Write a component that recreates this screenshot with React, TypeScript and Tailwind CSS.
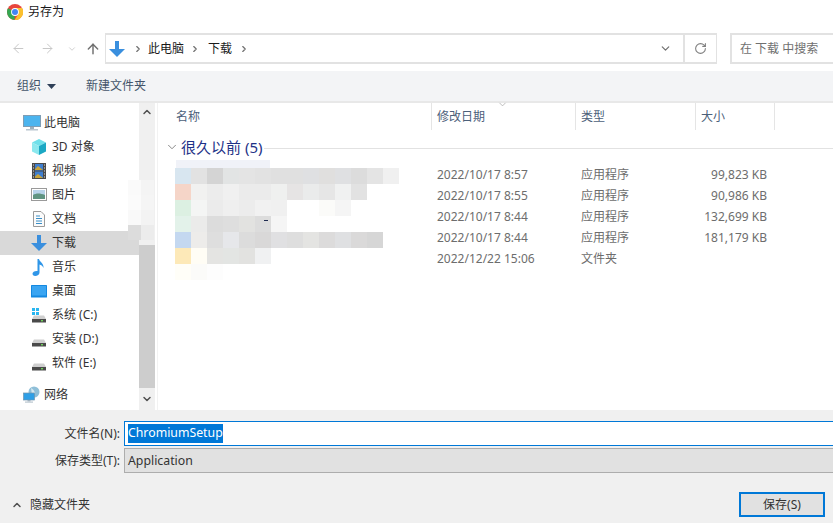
import React from "react";
import { ArrowLeft, ArrowRight, ArrowUp, ChevronDown, ChevronRight, ChevronUp, RotateCw } from "lucide-react";

const ChromeIcon = () => (
  <svg width="16" height="16" viewBox="0 0 16 16">
    <circle cx="8" cy="8" r="8" fill="#e8453c" />
    <path d="M8 8 L1 4.2 A8 8 0 0 0 7.6 16 Z" fill="#34a853" />
    <path d="M8 4 H15.1 A8 8 0 0 1 7.6 16 L11.4 10 Z" fill="#fbc02d" />
    <circle cx="8" cy="8" r="3.9" fill="#fff" />
    <circle cx="8" cy="8" r="3" fill="#4285f4" />
  </svg>
);

const DownArrow = ({ size = 16 }: { size?: number }) => (
  <svg width={size} height={size} viewBox="0 0 16 16">
    <path d="M6 0 H10 V8 H16 L8 16 L0 8 H6 Z" fill="#3a8fde" />
  </svg>
);

const PcIcon = () => (
  <svg width="18" height="16" viewBox="0 0 18 16">
    <rect x="0.5" y="0.5" width="17" height="11" fill="#4cb4ee" stroke="#7f9db4" />
    <rect x="7" y="12" width="4" height="2" fill="#9db0bd" />
    <rect x="3" y="14" width="12" height="1.5" fill="#b9c6cf" />
  </svg>
);

const CubeIcon = () => (
  <svg width="16" height="16" viewBox="0 0 16 16">
    <path d="M8 0 L15 3.5 L8 7 L1 3.5 Z" fill="#6fe0ea" />
    <path d="M1 3.5 L8 7 V16 L1 12.5 Z" fill="#8ce8ee" />
    <path d="M15 3.5 L8 7 V16 L15 12.5 Z" fill="#1ba8c4" />
  </svg>
);

const VideoIcon = () => (
  <svg width="16" height="16" viewBox="0 0 16 16">
    <rect x="1" y="0" width="14" height="16" fill="#4a4a4a" />
    <rect x="4" y="1" width="8" height="6.5" fill="#3f7fd0" />
    <rect x="4" y="8.5" width="8" height="6.5" fill="#3f7fd0" />
    <path d="M4 6 L7 3 L12 7 H4 Z M4 13.5 L7 11 L12 15 H4 Z" fill="#c9a43a" />
    <path d="M2 2 H3 M2 5 H3 M2 8 H3 M2 11 H3 M2 14 H3 M13 2 H14 M13 5 H14 M13 8 H14 M13 11 H14 M13 14 H14" stroke="#ddd" strokeWidth="1.2" />
  </svg>
);

const PictureIcon = () => (
  <svg width="16" height="14" viewBox="0 0 16 14">
    <rect x="0.5" y="0.5" width="15" height="12" fill="#fff" stroke="#9a9a9a" />
    <rect x="2" y="2" width="12" height="5" fill="#b7d3ea" />
    <path d="M2 7 C5 5 9 5 14 7 V11 H2 Z" fill="#5f9482" />
  </svg>
);

const DocIcon = () => (
  <svg width="14" height="16" viewBox="0 0 14 16">
    <path d="M1.5 0.5 H9 L12.5 4 V15.5 H1.5 Z" fill="#fbfbfb" stroke="#9a9a9a" />
    <path d="M4 5 H8 M4 7.5 H10 M4 10 H10 M4 12.5 H10" stroke="#3a8fc8" strokeWidth="1" />
  </svg>
);

const MusicIcon = () => (
  <svg width="14" height="17" viewBox="0 0 14 17">
    <path d="M5.5 0 H7 C7.5 3 12 4 11.5 9 C10.5 6.5 9 6 7.5 5.5 V13.5 C7.5 15.5 5.5 17 3.2 17 C1.4 17 0.5 16 0.5 14.8 C0.5 13 2.8 11.6 5.5 12 Z" fill="#2f96e8" />
  </svg>
);

const DesktopIcon = () => (
  <svg width="16" height="13" viewBox="0 0 16 13">
    <rect x="0" y="0" width="16" height="12.5" rx="0.5" fill="#1488e0" />
    <rect x="1" y="1" width="14" height="9.5" fill="#3aa5f2" />
  </svg>
);

const DriveIcon = ({ win }: { win?: boolean }) => (
  <svg width="16" height="16" viewBox="0 0 16 16">
    {win && <path d="M1 1 H4 V4 H1 Z M5 1 H8 V4 H5 Z M1 5 H4 V8 H1 Z M5 5 H8 V8 H5 Z" fill="#29b6f0" />}
    <path d="M3 8.5 H13 L15 12 H1 Z" fill="#cfcfcf" />
    <rect x="1" y="12" width="14" height="3.5" fill="#4a4a4a" />
    <rect x="10" y="13" width="2" height="1.4" fill="#6fd05a" />
  </svg>
);

const NetworkIcon = () => (
  <svg width="18" height="18" viewBox="0 0 18 18">
    <circle cx="11" cy="6" r="5.5" fill="#8fbfd8" />
    <path d="M8 2 C10 3 12 5 12 8 L9 9 Z" fill="#d5e8f0" />
    <rect x="0.5" y="7" width="11" height="7" fill="#2e9fe6" stroke="#6f93ab" strokeWidth="0.7" />
    <rect x="4.5" y="14" width="3" height="1.5" fill="#9db0bd" />
    <rect x="2" y="15.5" width="8" height="1.2" fill="#b9c6cf" />
  </svg>
);

const navItems = [
  { label: "此电脑", icon: <PcIcon />, top: true },
  { label: "3D 对象", icon: <CubeIcon /> },
  { label: "视频", icon: <VideoIcon /> },
  { label: "图片", icon: <PictureIcon /> },
  { label: "文档", icon: <DocIcon /> },
  { label: "下载", icon: <DownArrow />, active: true },
  { label: "音乐", icon: <MusicIcon /> },
  { label: "桌面", icon: <DesktopIcon /> },
  { label: "系统 (C:)", icon: <DriveIcon win /> },
  { label: "安装 (D:)", icon: <DriveIcon /> },
  { label: "软件 (E:)", icon: <DriveIcon /> },
];

const files = [
  { date: "2022/10/17 8:57", type: "应用程序", size: "99,823 KB" },
  { date: "2022/10/17 8:55", type: "应用程序", size: "90,986 KB" },
  { date: "2022/10/17 8:44", type: "应用程序", size: "132,699 KB" },
  { date: "2022/10/17 8:44", type: "应用程序", size: "181,179 KB" },
  { date: "2022/12/22 15:06", type: "文件夹", size: "" },
];

// pixelated file names, one row per 16px
const mosaic = [
  ["#d8e6f0", "#e2e2e2", "#d4d4d4", "#e2e4e4", "#e4e4e4", "#e2e2e2", "#e0e0e0", "#e0e0e0", "#dfe0e2", "#e0dfde", "#dfe0e2", "#dcdcdc", "#e4e4e4", "#f0f0f0"],
  ["#f5d5c8", "#f1f1f0", "#ececec", "#f0f0f0", "#ebebeb", "#ebebeb", "#eff0ef", "#e6e4e4", "#eaebeb", "#e6e6e6", "#f0f1f1", "#e2e2e2"],
  ["#dcf0e2", "#f4f5f4", "#ebebeb", "#efefef", "#ececec", "#f1f1f1", "#f0f0f0", "#ffffff", "#ffffff", "#fbfbf9", "#f5f5f5"],
  ["#e3f2ea", "#ebebea", "#dcdcdc", "#dedede", "#e2e2e0", "#dcdcdc", "#f5f5f5"],
  ["#c4d8f0", "#edecea", "#dedede", "#e6e7ea", "#dcdcdc", "#d9d8d8", "#e0e0e2", "#dedede", "#e4e4e2", "#dcdbdb", "#dfe0e2", "#dad9d9", "#d6d6d6"],
  ["#fde9b8", "#fffdf5", "#e4e4e2", "#e3e5e3", "#e2e2e0", "#f0f1f2"],
  ["#fffef8", "#fbfbf9", "#fdfdfd"],
];

// the same smear reaches over the sidebar's right edge
const smear = [
  ["#fafafa", "#f4f4f4"],
  ["#fbfbfb", "#f5f5f5"],
  ["#f9f9f9", "#f3f3f3"],
  ["#dcdcdc", "#ececec"],
];

const App: React.FC = () => {
  return (
    <div className="flex h-[523px] w-[833px] flex-col overflow-hidden bg-white text-[12px] text-[#1a1a1a] font-['Noto_Sans','Noto_Sans_CJK_SC',sans-serif]">
      <header className="flex h-6 shrink-0 items-center gap-[5px] pl-[7px]">
        <ChromeIcon />
        <span>另存为</span>
      </header>

      <div className="mt-[9px] flex h-[31px] shrink-0 items-center">
        <div className="flex w-[105px] items-center text-[#c8c8c8]">
          <ArrowLeft size={15} strokeWidth={1.6} className="ml-[11px]" />
          <ArrowRight size={15} strokeWidth={1.6} className="ml-[14px]" />
          <ChevronDown size={10} strokeWidth={2} className="ml-[12px]" />
          <ArrowUp size={16} strokeWidth={2.2} className="ml-[8px] text-[#707070]" />
        </div>
        <div className="flex h-[31px] w-[612px] items-center border-2 border-[#e2e2e2] border-x-[1.5px]">
          <div className="ml-[3px]"><DownArrow /></div>
          <ChevronRight size={10} strokeWidth={2.8} className="ml-[8px] text-[#707070]" />
          <span className="ml-[5px]">此电脑</span>
          <ChevronRight size={10} strokeWidth={2.8} className="ml-[6px] text-[#707070]" />
          <span className="ml-[8px]">下载</span>
          <ChevronRight size={10} strokeWidth={2.8} className="ml-[7px] text-[#707070]" />
          <ChevronDown size={13} strokeWidth={2.2} className="ml-auto mr-[11px] text-[#707070]" />
          <div className="flex h-full w-[33px] items-center justify-center border-l-2 border-[#e2e2e2]">
            <RotateCw size={13} strokeWidth={2} className="text-[#808080]" />
          </div>
        </div>
        <div className="ml-[13px] flex h-[31px] flex-1 items-center border-y-2 border-l-2 border-[#e2e2e2] pl-[8px] text-[#707070]">
          在 下载 中搜索
        </div>
      </div>

      <div className="mt-[7px] flex h-[32px] shrink-0 items-center border-b-2 border-[#e8e8e8] bg-[#f3f4f6] text-[#44546a]">
        <span className="ml-[17px]">组织</span>
        <svg width="9" height="5" viewBox="0 0 9 5" className="ml-[6px]"><path d="M0 0 H9 L4.5 5 Z" fill="#2f4058" /></svg>
        <span className="ml-[30px]">新建文件夹</span>
      </div>

      <main className="relative flex min-h-0 flex-1">
        <aside className="w-[139px] shrink-0 pt-2 text-[#333]">
          {navItems.map((item) => (
            <div
              key={item.label}
              className={`flex h-6 items-center ${item.top ? "pl-[23px]" : "pl-[31px]"} ${item.active ? "bg-[#d9d9d9]" : ""}`}
            >
              <span className={`flex items-center justify-center ${item.top ? "w-[18px]" : "w-4"}`}>{item.icon}</span>
              <span className={item.top ? "ml-[3px]" : "ml-[5px]"}>{item.label}</span>
            </div>
          ))}
          <div className="mt-2 flex h-6 items-center pl-[23px]">
            <NetworkIcon />
            <span className="ml-[3px]">网络</span>
          </div>
        </aside>

        <div className="flex w-[16px] shrink-0 flex-col bg-[#f0f0f0] text-[#505050]">
          <div className="flex h-[17px] items-center justify-center"><ChevronUp size={12} strokeWidth={3} /></div>
          <div className="mt-[125px] h-[143px] bg-[#cdcdcd]" />
          <div className="flex h-[22px] items-center justify-center"><ChevronDown size={12} strokeWidth={3} /></div>
        </div>

        <div className="absolute left-[128px] top-[77px]">
          {smear.map((row, r) => (
            <div key={r} className="flex h-[15px]">
              {row.map((color, c) => (
                <div key={c} className="h-[15px] w-[13px]" style={{ backgroundColor: color }} />
              ))}
            </div>
          ))}
        </div>

        <section className="relative ml-[2px] min-w-0 flex-1 border-l border-[#f2f2f2]">
          <div className="relative flex h-[27px] items-center text-[#4c607a]">
            <div className="w-[273px] pl-[18px]">名称</div>
            <div className="flex h-full w-[144px] items-center border-l border-[#e5e5e5] pl-[5px]">修改日期</div>
            <div className="flex h-full w-[120px] items-center border-l border-[#e5e5e5] pl-[5px]">类型</div>
            <div className="flex h-full w-[80px] items-center border-x border-[#e5e5e5] pl-[5px]">大小</div>
            <ChevronDown size={11} strokeWidth={1.5} className="absolute left-[339px] top-[-4px] text-[#a0a0a0]" />
          </div>

          <div className="mt-[5px] flex h-6 items-center">
            <ChevronDown size={14} strokeWidth={1.4} className="ml-[7px] text-[#707070]" />
            <span className="ml-[2px] text-[15px] text-[#1e3287]">很久以前 (5)</span>
            <div className="ml-[2px] mt-[2px] h-px flex-1 bg-[#e2e2e2]" />
          </div>

          <div className="mt-[5px] text-[#6d6d6d]">
            {files.map((file, i) => (
              <div key={i} className="flex h-[21px] items-center">
                <div className="w-[273px]" />
                <div className="w-[144px] pl-[6px]">{file.date}</div>
                <div className="w-[120px] pl-[6px]">{file.type}</div>
                <div className="w-[80px] pr-[8px] text-right">{file.size}</div>
              </div>
            ))}
          </div>

          {/* blurred file names */}
          <div className="absolute left-[18px] top-[57px] h-2 w-[94px] bg-[#f0f2f8]" />
          <div className="absolute left-[17px] top-[65px]">
            {mosaic.map((row, r) => (
              <div key={r} className="flex h-4">
                {row.map((color, c) => (
                  <div key={c} className="h-4 w-4" style={{ backgroundColor: color }} />
                ))}
              </div>
            ))}
          </div>
          <div className="absolute left-[106px] top-[117px] h-px w-[4px] bg-[#1e2a50]" />
        </section>
      </main>

      <footer className="relative flex h-[113px] shrink-0 flex-col bg-[#f0f0f0] text-[#333]">
        <div className="mt-[11px] flex h-[25px] items-center">
          <div className="w-[120px] text-right">文件名(N):</div>
          <div className="ml-[4px] flex h-[25px] flex-1 items-center border-y border-l border-[#0078d7] bg-white pl-[3px] text-[12.3px]">
            <span className="bg-[#0078d7] text-white">ChromiumSetup</span>
          </div>
        </div>
        <div className="mt-[2px] flex h-[25px] items-center">
          <div className="w-[120px] pt-px text-right">保存类型(T):</div>
          <div className="ml-[4px] flex h-[25px] flex-1 items-center border-y border-l border-[#adadad] bg-[#e1e1e1] pl-[3px] pt-px text-[12.3px]">
            Application
          </div>
        </div>
        <div className="mt-[19px] flex items-start">
          <div className="mt-[4px] flex items-center">
            <ChevronUp size={12} strokeWidth={3} className="ml-[11px] text-[#505050]" />
            <span className="ml-[7px]">隐藏文件夹</span>
          </div>
          <button className="ml-auto mr-[8px] h-[25px] w-[86px] border-2 border-[#0078d7] bg-[#e1e1e1]">保存(S)</button>
        </div>
      </footer>
    </div>
  );
};

export default App;
